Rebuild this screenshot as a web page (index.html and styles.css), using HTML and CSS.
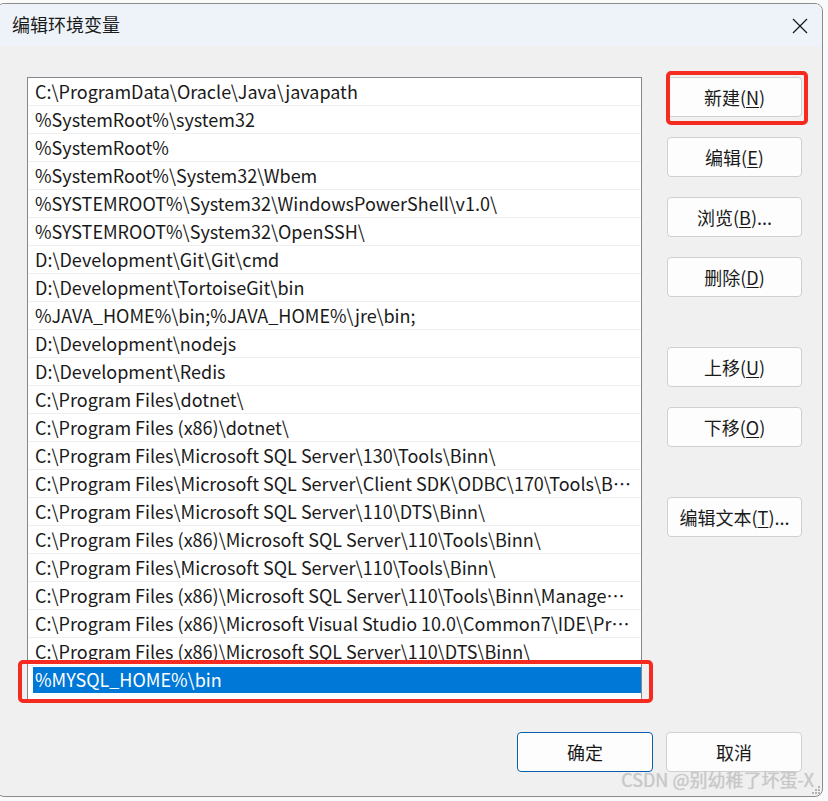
FILE: index.html
```html
<!DOCTYPE html>
<html lang="zh-CN">
<head>
    <meta charset="UTF-8">
    <title>编辑环境变量</title>
    <link rel="stylesheet" href="styles.css">
</head>
<body>

<div class="dialog">
    <div class="titlebar">
        <span class="title">编辑环境变量</span>
        <span class="close">
            <svg width="16" height="16" viewBox="0 0 16 16"><path d="M1 1L15 15M15 1L1 15" stroke="#1a1a1a" stroke-width="1.3" fill="none"/></svg>
        </span>
    </div>

    <div class="content">
        <div class="main">
            <!-- Path entries -->
            <div class="list">
                <div class="row">C:\ProgramData\Oracle\Java\javapath</div>
                <div class="row">%SystemRoot%\system32</div>
                <div class="row">%SystemRoot%</div>
                <div class="row">%SystemRoot%\System32\Wbem</div>
                <div class="row">%SYSTEMROOT%\System32\WindowsPowerShell\v1.0\</div>
                <div class="row">%SYSTEMROOT%\System32\OpenSSH\</div>
                <div class="row">D:\Development\Git\Git\cmd</div>
                <div class="row">D:\Development\TortoiseGit\bin</div>
                <div class="row">%JAVA_HOME%\bin;%JAVA_HOME%\jre\bin;</div>
                <div class="row">D:\Development\nodejs</div>
                <div class="row">D:\Development\Redis</div>
                <div class="row">C:\Program Files\dotnet\</div>
                <div class="row">C:\Program Files (x86)\dotnet\</div>
                <div class="row">C:\Program Files\Microsoft SQL Server\130\Tools\Binn\</div>
                <div class="row">C:\Program Files\Microsoft SQL Server\Client SDK\ODBC\170\Tools\Binn\</div>
                <div class="row">C:\Program Files\Microsoft SQL Server\110\DTS\Binn\</div>
                <div class="row">C:\Program Files (x86)\Microsoft SQL Server\110\Tools\Binn\</div>
                <div class="row">C:\Program Files\Microsoft SQL Server\110\Tools\Binn\</div>
                <div class="row">C:\Program Files (x86)\Microsoft SQL Server\110\Tools\Binn\ManagementStudio\</div>
                <div class="row">C:\Program Files (x86)\Microsoft Visual Studio 10.0\Common7\IDE\PrivateAssemblies\</div>
                <div class="row">C:\Program Files (x86)\Microsoft SQL Server\110\DTS\Binn\</div>
                <div class="row editing">
                    <span class="selected-text">%MYSQL_HOME%\bin</span>
                    <span class="mark mark-row"></span>
                </div>
            </div>

            <!-- Side buttons -->
            <div class="actions">
                <div class="btn-wrap">
                    <button class="btn">新建(<u>N</u>)</button>
                    <span class="mark mark-btn"></span>
                </div>
                <button class="btn">编辑(<u>E</u>)</button>
                <button class="btn">浏览(<u>B</u>)...</button>
                <button class="btn">删除(<u>D</u>)</button>
                <button class="btn group-start">上移(<u>U</u>)</button>
                <button class="btn">下移(<u>O</u>)</button>
                <button class="btn group-start">编辑文本(<u>T</u>)...</button>
            </div>
        </div>

        <div class="footer">
            <button class="btn btn-wide btn-default">确定</button>
            <button class="btn btn-wide">取消</button>
        </div>
    </div>

    <span class="watermark">CSDN @别幼稚了坏蛋-X</span>
    <svg class="grip" width="8" height="8" viewBox="0 0 8 8">
        <rect x="6" y="0" width="2" height="2" fill="#b4b4b4"/>
        <rect x="3" y="3" width="2" height="2" fill="#b4b4b4"/>
        <rect x="6" y="3" width="2" height="2" fill="#b4b4b4"/>
        <rect x="0" y="6" width="2" height="2" fill="#b4b4b4"/>
        <rect x="3" y="6" width="2" height="2" fill="#b4b4b4"/>
        <rect x="6" y="6" width="2" height="2" fill="#b4b4b4"/>
    </svg>
</div>

</body>
</html>
```

FILE: styles.css
```css
/* Page behind the dialog */
body {
    margin: 0;
    padding: 0;
    background-color: #fafafa;
    font-family: "Noto Sans CJK SC", "Noto Sans", sans-serif;
    color: #1a1a1a;
    overflow: hidden;
}
.dialog {
    position: relative;
    box-sizing: border-box;
    width: 827px;
    height: 794px;
    margin: 3px 0 0 -4px;
    border: 1px solid #8c8c8c;
    border-radius: 8px;
    background-color: #f0f0f0;
    overflow: hidden;
}
.titlebar {
    display: flex;
    align-items: center;
    justify-content: space-between;
    height: 42px;
    padding: 0 14px 0 15px;
    background-color: #eef3f9;
}
.title {
    font-size: 18px;
    padding-bottom: 2px;
}
.close {
    display: flex;
    padding-top: 2px;
}
.content {
    padding: 31px 20px 24px 30px;
}
.main {
    display: flex;
    gap: 25px;
}
/* List of path entries */
.list {
    box-sizing: border-box;
    width: 615px;
    height: 623px;
    border: 1px solid #828790;
    background-color: #fff;
}
.row {
    position: relative;
    box-sizing: border-box;
    height: 28px;
    line-height: 27px;
    padding: 0 8px 0 7px;
    border-bottom: 1px solid #f0f0f0;
    font-size: 18px;
    white-space: nowrap;
    overflow: hidden;
    text-overflow: ellipsis;
}
.row.editing {
    overflow: visible;
    padding: 1px 0 1px 5px;
    border-bottom: none;
}
.selected-text {
    display: block;
    height: 26px;
    line-height: 25px;
    padding-left: 2px;
    background-color: #0078d7;
    color: #fff;
}
/* Buttons */
.actions {
    display: flex;
    flex-direction: column;
    gap: 20px;
}
.btn {
    box-sizing: border-box;
    width: 135px;
    height: 40px;
    padding: 0;
    border: 1px solid #d0d0d0;
    border-radius: 4px;
    background-color: #fdfdfd;
    font-family: inherit;
    font-size: 18px;
    color: #1a1a1a;
}
.btn u {
    text-underline-offset: 2px;
}
.btn-wide {
    width: 136px;
}
.group-start {
    margin-top: 30px;
}
.btn-default {
    border-color: #0a5fad;
}
.btn-wrap {
    position: relative;
    display: flex;
}
.footer {
    display: flex;
    justify-content: flex-end;
    gap: 13px;
    margin-top: 32px;
}
/* Red annotation boxes */
.mark {
    position: absolute;
    border: 4px solid #f52a20;
    border-radius: 5px;
    pointer-events: none;
}
.mark-row {
    top: -6px;
    left: -10px;
    right: -12px;
    bottom: -9px;
}
.mark-btn {
    top: -6px;
    left: -1px;
    right: -6px;
    bottom: -8px;
}
.watermark {
    position: absolute;
    right: 8px;
    bottom: 4px;
    font-size: 18px;
    color: #c8c8c8;
    text-shadow: 0 0 1px rgba(0, 0, 0, 0.15);
}
.grip {
    position: absolute;
    right: 2px;
    bottom: 2px;
}
```
